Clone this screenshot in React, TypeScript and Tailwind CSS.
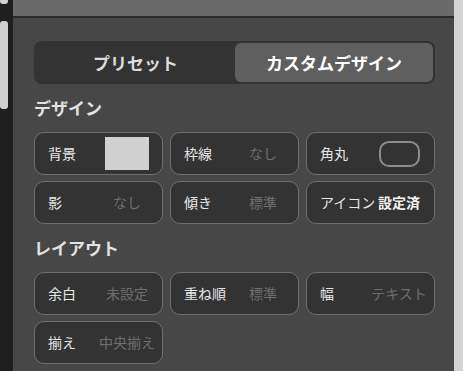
import type { ReactNode } from "react";

type Item = { label: string; value?: ReactNode };

function Swatch() {
    return <div className="w-[44px] h-[33px] bg-[#d0d0d0]" />;
}

function CornerIcon() {
    return <div className="w-[41px] h-[26px] rounded-[10px] border-2 border-[#8c8c8c]" />;
}

const DESIGN: Item[] = [
    { label: "背景", value: <Swatch /> },
    { label: "枠線", value: "なし" },
    { label: "角丸", value: <CornerIcon /> },
    { label: "影", value: "なし" },
    { label: "傾き", value: "標準" },
    { label: "アイコン", value: <span className="font-bold text-[#f0f0f0]">設定済</span> },
];

const LAYOUT: Item[] = [
    { label: "余白", value: "未設定" },
    { label: "重ね順", value: "標準" },
    { label: "幅", value: "テキスト" },
    { label: "揃え", value: "中央揃え" },
];

function Card({ label, value }: Item) {
    return (
        <div className="h-[43px] flex items-center justify-between pl-[13px] pr-[12px] bg-[#333333] border border-[#707070] rounded-[10px]">
            <span className="text-[14px] text-[#e6e6e6] whitespace-nowrap">{label}</span>
            <div className="w-[46px] flex justify-center whitespace-nowrap text-[14px] text-[#6e6e6e]">{value}</div>
        </div>
    );
}

function Section({ title, items }: { title: string; items: Item[] }) {
    return (
        <div>
            <h2 className="h-[24px] leading-[24px] my-[12px] text-[17px] font-bold text-[#e2e2e2]">{title}</h2>
            <div className="grid grid-cols-3 gap-x-[7px] gap-y-[6px]">
                {items.map((it) => (
                    <Card key={it.label} {...it} />
                ))}
            </div>
        </div>
    );
}

export default function App() {
    return (
        <div
            className="w-[463px] h-[371px] flex overflow-hidden bg-[#1f1f1f]"
            style={{ fontFamily: '"Noto Sans CJK JP", "Noto Sans", sans-serif' }}
        >
            {/* 左のスクロール片 */}
            <div className="w-[8px] flex flex-col">
                <div className="h-[4px] bg-[#d0d0d0] rounded-b-[3px]" />
                <div className="mt-[17px] h-[88px] bg-[#d0d0d0] rounded-[3px]" />
            </div>
            <div className="w-[5px]" />

            <div className="flex-1 flex flex-col bg-[#474747]">
                <div className="h-[18px] bg-[#6a6a6a] border-b-2 border-[#2c2c2c]" />
                <div className="pl-[21px] pr-[19px] pt-[23px]">
                    <div className="h-[43px] flex items-center p-[2px] bg-[#333333] rounded-[8px]">
                        <div className="flex-1 h-full flex items-center justify-center text-[17px] font-bold text-[#dcdcdc]">
                            プリセット
                        </div>
                        <div className="w-[198px] h-full flex items-center justify-center rounded-[6px] bg-[#5f5f5f] text-[17px] font-bold text-white">
                            カスタムデザイン
                        </div>
                    </div>
                    <Section title="デザイン" items={DESIGN} />
                    <Section title="レイアウト" items={LAYOUT} />
                </div>
            </div>

            <div className="w-[9px] bg-[#d4d4d4]" />
        </div>
    );
}
